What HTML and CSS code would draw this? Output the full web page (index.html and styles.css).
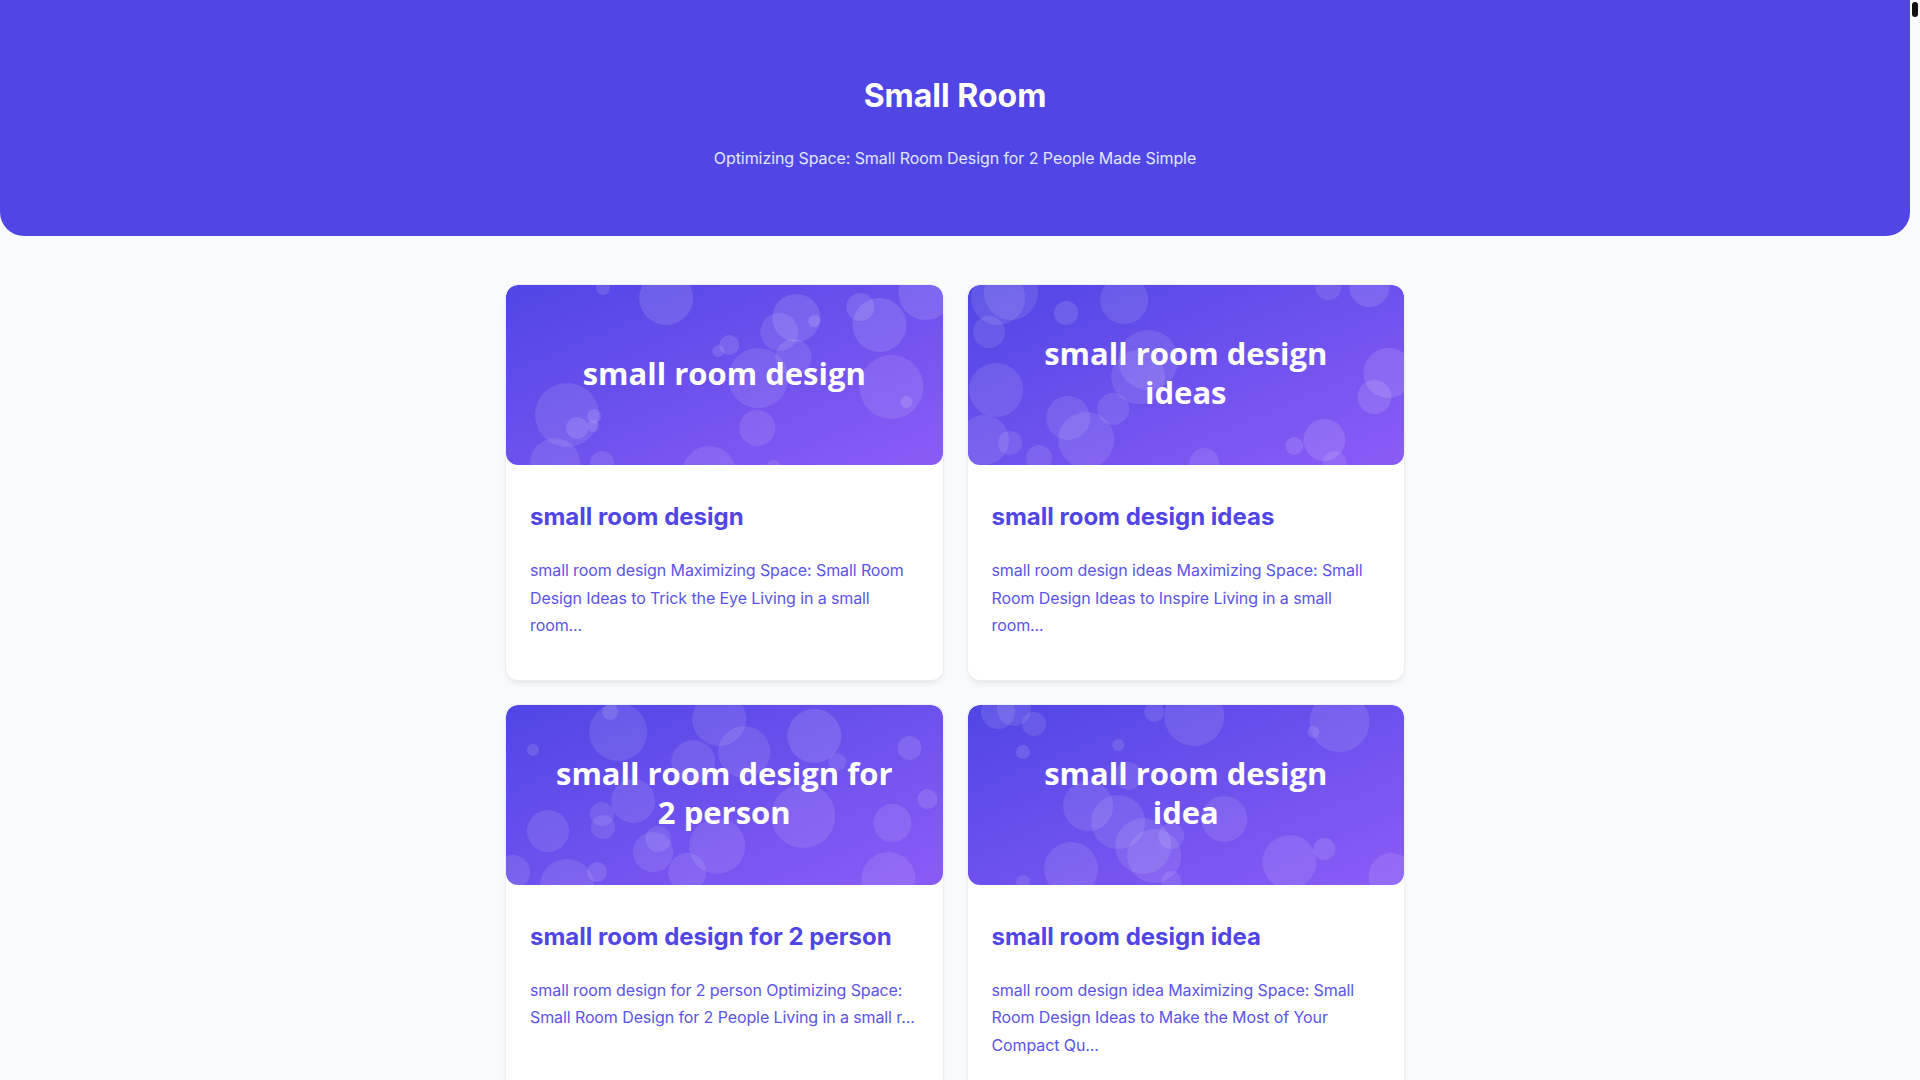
FILE: index.html
```html
<!DOCTYPE html>
<html lang="en">
<head>
<meta charset="utf-8">
<title>Small Room</title>
<link rel="stylesheet" href="styles.css">
</head>
<body>
<div class="scroll-thumb"></div>
<header class="hero">
  <h1 class="hero-title">Small Room</h1>
  <p class="hero-sub">Optimizing Space: Small Room Design for 2 People Made Simple</p>
</header>
<main class="grid">
  <article class="card">
    <div class="thumb">
      <svg class="bubbles" viewBox="0 0 436 180" preserveAspectRatio="none">
        <circle cx="160" cy="13" r="27" opacity=".12"/>
        <circle cx="97" cy="3" r="7" opacity=".12"/>
        <circle cx="290" cy="33" r="24" opacity=".12"/>
        <circle cx="273" cy="47" r="19" opacity=".1"/>
        <circle cx="373" cy="40" r="27" opacity=".12"/>
        <circle cx="354" cy="22" r="14" opacity=".12"/>
        <circle cx="308" cy="36" r="6" opacity=".14"/>
        <circle cx="419" cy="8" r="27" opacity=".12"/>
        <circle cx="385" cy="102" r="32" opacity=".1"/>
        <circle cx="400" cy="117" r="6" opacity=".14"/>
        <circle cx="252" cy="93" r="30" opacity=".1"/>
        <circle cx="287" cy="72" r="18" opacity=".1"/>
        <circle cx="223" cy="60" r="10" opacity=".12"/>
        <circle cx="212" cy="66" r="6" opacity=".12"/>
        <circle cx="61" cy="130" r="32" opacity=".1"/>
        <circle cx="71" cy="143" r="11" opacity=".12"/>
        <circle cx="88" cy="131" r="7" opacity=".12"/>
        <circle cx="87" cy="141" r="6" opacity=".12"/>
        <circle cx="251" cy="143" r="18" opacity=".1"/>
        <circle cx="49" cy="178" r="25" opacity=".1"/>
        <circle cx="96" cy="178" r="12" opacity=".1"/>
        <circle cx="203" cy="188" r="27" opacity=".1"/>
        <circle cx="267" cy="182" r="7" opacity=".1"/>
      </svg>
      <span class="thumb-text">small room design</span>
    </div>
    <div class="card-body">
      <h2 class="card-title">small room design</h2>
      <p class="card-desc">small room design Maximizing Space: Small Room Design Ideas to Trick the Eye Living in a small room...</p>
    </div>
  </article>
  <article class="card">
    <div class="thumb">
      <svg class="bubbles" viewBox="0 0 436 180" preserveAspectRatio="none">
        <circle cx="43" cy="8" r="27" opacity=".1"/>
        <circle cx="30" cy="13" r="27" opacity=".1"/>
        <circle cx="98" cy="28" r="12" opacity=".12"/>
        <circle cx="21" cy="47" r="16" opacity=".1"/>
        <circle cx="156" cy="15" r="24" opacity=".1"/>
        <circle cx="28" cy="105" r="27" opacity=".1"/>
        <circle cx="100" cy="133" r="22" opacity=".1"/>
        <circle cx="118" cy="155" r="28" opacity=".1"/>
        <circle cx="145" cy="124" r="16" opacity=".1"/>
        <circle cx="180" cy="75" r="30" opacity=".1"/>
        <circle cx="170" cy="92" r="27" opacity=".1"/>
        <circle cx="42" cy="158" r="12" opacity=".1"/>
        <circle cx="16" cy="155" r="25" opacity=".1"/>
        <circle cx="71" cy="173" r="13" opacity=".1"/>
        <circle cx="356" cy="155" r="21" opacity=".12"/>
        <circle cx="326" cy="161" r="9" opacity=".12"/>
        <circle cx="420" cy="88" r="25" opacity=".12"/>
        <circle cx="406" cy="112" r="17" opacity=".12"/>
        <circle cx="401" cy="2" r="20" opacity=".12"/>
        <circle cx="360" cy="2" r="13" opacity=".1"/>
        <circle cx="236" cy="178" r="15" opacity=".1"/>
        <circle cx="366" cy="178" r="12" opacity=".1"/>
      </svg>
      <span class="thumb-text">small room design ideas</span>
    </div>
    <div class="card-body">
      <h2 class="card-title">small room design ideas</h2>
      <p class="card-desc">small room design ideas Maximizing Space: Small Room Design Ideas to Inspire Living in a small room...</p>
    </div>
  </article>
  <article class="card">
    <div class="thumb">
      <svg class="bubbles" viewBox="0 0 436 180" preserveAspectRatio="none">
        <circle cx="112" cy="27" r="29" opacity=".1"/>
        <circle cx="104" cy="7" r="8" opacity=".12"/>
        <circle cx="27" cy="45" r="6" opacity=".12"/>
        <circle cx="213" cy="14" r="27" opacity=".1"/>
        <circle cx="238" cy="47" r="26" opacity=".1"/>
        <circle cx="187" cy="57" r="22" opacity=".1"/>
        <circle cx="308" cy="31" r="27" opacity=".12"/>
        <circle cx="331" cy="57" r="9" opacity=".1"/>
        <circle cx="403" cy="43" r="12" opacity=".12"/>
        <circle cx="421" cy="94" r="10" opacity=".12"/>
        <circle cx="386" cy="118" r="19" opacity=".1"/>
        <circle cx="297" cy="111" r="32" opacity=".1"/>
        <circle cx="127" cy="96" r="22" opacity=".1"/>
        <circle cx="96" cy="109" r="12" opacity=".1"/>
        <circle cx="97" cy="122" r="12" opacity=".1"/>
        <circle cx="42" cy="126" r="21" opacity=".1"/>
        <circle cx="147" cy="147" r="20" opacity=".1"/>
        <circle cx="152" cy="134" r="13" opacity=".1"/>
        <circle cx="211" cy="141" r="28" opacity=".1"/>
        <circle cx="181" cy="167" r="19" opacity=".1"/>
        <circle cx="91" cy="167" r="10" opacity=".12"/>
        <circle cx="61" cy="181" r="27" opacity=".1"/>
        <circle cx="7" cy="167" r="17" opacity=".1"/>
        <circle cx="382" cy="174" r="27" opacity=".1"/>
      </svg>
      <span class="thumb-text">small room design for 2 person</span>
    </div>
    <div class="card-body">
      <h2 class="card-title">small room design for 2 person</h2>
      <p class="card-desc">small room design for 2 person Optimizing Space: Small Room Design for 2 People Living in a small r...</p>
    </div>
  </article>
  <article class="card">
    <div class="thumb">
      <svg class="bubbles" viewBox="0 0 436 180" preserveAspectRatio="none">
        <circle cx="30" cy="7" r="17" opacity=".1"/>
        <circle cx="46" cy="4" r="17" opacity=".1"/>
        <circle cx="66" cy="19" r="12" opacity=".1"/>
        <circle cx="55" cy="47" r="7" opacity=".12"/>
        <circle cx="150" cy="40" r="6" opacity=".12"/>
        <circle cx="226" cy="11" r="30" opacity=".1"/>
        <circle cx="186" cy="7" r="10" opacity=".1"/>
        <circle cx="371" cy="17" r="30" opacity=".1"/>
        <circle cx="345" cy="27" r="6" opacity=".12"/>
        <circle cx="160" cy="71" r="14" opacity=".1"/>
        <circle cx="120" cy="101" r="25" opacity=".1"/>
        <circle cx="150" cy="117" r="27" opacity=".1"/>
        <circle cx="175" cy="141" r="28" opacity=".1"/>
        <circle cx="186" cy="151" r="27" opacity=".1"/>
        <circle cx="256" cy="114" r="23" opacity=".1"/>
        <circle cx="203" cy="131" r="13" opacity=".1"/>
        <circle cx="103" cy="164" r="27" opacity=".1"/>
        <circle cx="321" cy="157" r="27" opacity=".1"/>
        <circle cx="356" cy="144" r="11" opacity=".12"/>
        <circle cx="423" cy="171" r="23" opacity=".1"/>
        <circle cx="55" cy="177" r="7" opacity=".1"/>
        <circle cx="203" cy="176" r="10" opacity=".1"/>
      </svg>
      <span class="thumb-text">small room design idea</span>
    </div>
    <div class="card-body">
      <h2 class="card-title">small room design idea</h2>
      <p class="card-desc">small room design idea Maximizing Space: Small Room Design Ideas to Make the Most of Your Compact Qu...</p>
    </div>
  </article>
</main>
</body>
</html>
```
FILE: styles.css
```css
html {
  background: #f9fafb;
}
body {
  margin: 0 10px 0 0;
  font-family: Inter, "Liberation Sans", sans-serif;
  background: #f9fafb;
  min-height: 1200px;
}
.scroll-thumb {
  position: fixed;
  top: 2px;
  right: 2px;
  width: 6px;
  height: 15px;
  border-radius: 3px;
  background: #111111;
}
.hero {
  background: #4f46e5;
  color: #ffffff;
  text-align: center;
  padding: 76px 20px 66px;
  border-radius: 0 0 24px 24px;
}
.hero-title {
  margin: 0 0 30px;
  font-size: 32px;
  line-height: 40px;
  font-weight: 700;
}
.hero-sub {
  margin: 0;
  font-size: 16px;
  line-height: 24px;
  letter-spacing: -0.08px;
  color: #e0e7ff;
}
.grid {
  width: 898px;
  margin: 49px auto 0;
  display: grid;
  grid-template-columns: 1fr 1fr;
  gap: 25px 25px;
}
.card {
  background: #ffffff;
  border-radius: 12px;
  box-shadow: 0 0 0 1px #eceef2, 0 4px 6px -1px rgba(0, 0, 0, 0.08), 0 2px 4px -2px rgba(0, 0, 0, 0.06);
  overflow: hidden;
}
.thumb {
  display: grid;
  height: 180px;
  border-radius: 12px;
  overflow: hidden;
  background: linear-gradient(to bottom right, #4f46e5, #8b5cf6);
}
.bubbles {
  grid-area: 1 / 1;
  width: 100%;
  height: 100%;
  fill: #ffffff;
}
.thumb-text {
  grid-area: 1 / 1;
  align-self: center;
  justify-self: center;
  padding: 0 46px 4px;
  text-align: center;
  font-family: "Open Sans", "Noto Sans", sans-serif;
  font-weight: 700;
  font-size: 31px;
  line-height: 39px;
  color: #ffffff;
}
.card-body {
  padding: 36px 24px 40px;
}
.card-title {
  margin: 0 0 24px;
  font-size: 24px;
  line-height: 32px;
  font-weight: 700;
  color: #4f46e5;
}
.card-desc {
  margin: 0;
  font-size: 16px;
  line-height: 27.5px;
  letter-spacing: -0.1px;
  color: #5b54e8;
}
```
